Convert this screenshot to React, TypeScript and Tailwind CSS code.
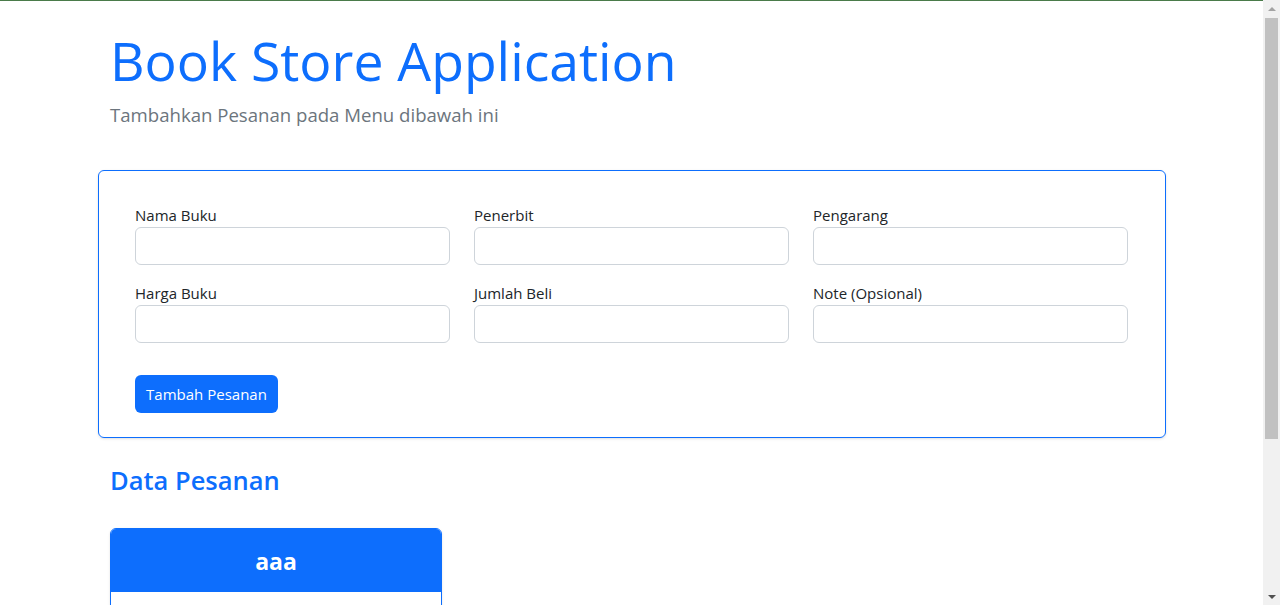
const fields = [
  { label: "Nama Buku" },
  { label: "Penerbit" },
  { label: "Pengarang" },
  { label: "Harga Buku" },
  { label: "Jumlah Beli" },
  { label: "Note (Opsional)" },
];

export default function App() {
  return (
    <div
      className="min-h-[830px] bg-white border-t border-[#4a7b4a] text-[#212529]"
      style={{ fontFamily: '"Open Sans", "Noto Sans", sans-serif' }}
    >
      <div className="w-[1068px] ml-[98px]">
        <div className="px-3 pt-[28px]">
          <h1 className="text-[53.5px] leading-[1.2] text-[#0d6efd] font-normal">
            Book Store Application
          </h1>
          <p className="text-[18.6px] leading-[1.5] text-[#6c757d] mt-[8px]">
            Tambahkan Pesanan pada Menu dibawah ini
          </p>
        </div>

        <div className="mt-[41px] border border-[#0d6efd] rounded-md shadow-sm pt-[32px] pl-[36px] pr-[37px] pb-[24px]">
          <div className="grid grid-cols-3 gap-x-6 gap-y-4">
            {fields.map((f) => (
              <div key={f.label}>
                <label className="block text-[15px] leading-6">{f.label}</label>
                <input
                  type="text"
                  className="block w-full h-[38px] border border-[#ced4da] rounded-md bg-white"
                />
              </div>
            ))}
          </div>
          <button className="mt-8 h-[38px] w-[143px] rounded-md bg-[#0d6efd] text-white text-[15px]">
            Tambah Pesanan
          </button>
        </div>

        <h3 className="px-3 mt-[27px] text-[25.5px] leading-[1.2] font-semibold text-[#0d6efd]">
          Data Pesanan
        </h3>

        <div className="ml-3 mt-[32px] w-[332px] rounded-md border border-[#0d6efd] shadow-sm overflow-hidden">
          <div className="bg-[#0d6efd] h-[63px] pt-[2px] flex items-center justify-center text-white text-[23px] font-bold">
            aaa
          </div>
          <div className="h-[200px] bg-white" />
        </div>
      </div>

      {/* window scrollbar */}
      <div className="fixed top-0 right-0 w-[17px] h-screen bg-[#f1f1f1] flex flex-col items-center">
        <div className="h-[17px] shrink-0 flex items-center justify-center">
          <div className="w-0 h-0 border-l-[4px] border-r-[4px] border-b-[4px] border-l-transparent border-r-transparent border-b-[#a3a3a3]" />
        </div>
        <div className="mt-px w-[13px] h-[421px] bg-[#c1c1c1]" />
        <div className="flex-1" />
        <div className="h-[17px] shrink-0 flex items-center justify-center">
          <div className="w-0 h-0 border-l-[4px] border-r-[4px] border-t-[4px] border-l-transparent border-r-transparent border-t-[#505050]" />
        </div>
      </div>
    </div>
  );
}
